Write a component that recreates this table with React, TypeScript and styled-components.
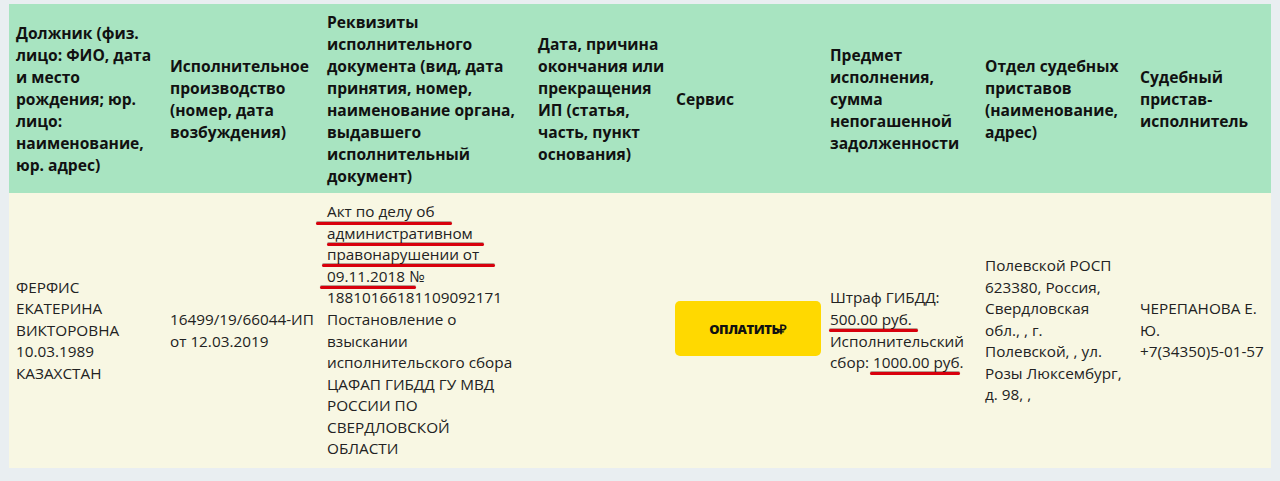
import React from "react";
import styled, { createGlobalStyle } from "styled-components";

const Global = createGlobalStyle`
  html, body { margin: 0; padding: 0; background: #e9eef1; }
  body { font-family: "Open Sans", "Noto Sans", sans-serif; color: #1d1d1d; }
`;

const Page = styled.div`
  padding: 4px 9px 13px 9px;
`;

const Table = styled.table`
  width: 1262px;
  table-layout: fixed;
  border-collapse: collapse;
  border-spacing: 0;
`;

const HeadRow = styled.tr`
  background: #a8e4c1;
  height: 189px;
`;

const BodyRow = styled.tr`
  background: #f8f7e3;
  height: 275px;
`;

const Th = styled.th`
  text-align: left;
  vertical-align: middle;
  font-weight: 700;
  font-size: 15.6px;
  line-height: 22px;
  color: #111;
  padding: 6px 3px 6px 7px;
`;

const Td = styled.td`
  vertical-align: middle;
  font-size: 15.3px;
  line-height: 21.6px;
  color: #222;
  padding: 6px 7px 6px 7px;
`;

const NoWrap = styled.span`
  white-space: nowrap;
`;

const Marked = styled.span<{ $l: number; $r: number; $y: number }>`
  position: relative;
  &::after {
    content: "";
    position: absolute;
    left: ${(p) => p.$l}px;
    right: ${(p) => p.$r}px;
    bottom: ${(p) => p.$y}px;
    height: 3px;
    border-radius: 2px;
    background: #d8000c;
    box-shadow: 0 -1px 0 rgba(60, 0, 0, 0.35);
  }
`;

const PayButton = styled.button`
  display: flex;
  align-items: center;
  justify-content: center;
  width: 146px;
  height: 55px;
  margin-left: -1px;
  margin-top: -4px;
  border: none;
  border-radius: 5px;
  background: #ffd900;
  font-family: "Open Sans", sans-serif;
  font-weight: 800;
  font-size: 13px;
  letter-spacing: -0.5px;
  color: #111;
  cursor: pointer;
`;

const widths = [154, 157, 211, 138, 154, 155, 155, 138];

export default function App() {
  return (
    <>
      <Global />
      <Page>
        <Table>
          <colgroup>
            {widths.map((w, i) => (
              <col key={i} style={{ width: w }} />
            ))}
          </colgroup>
          <thead>
            <HeadRow>
              <Th>Должник (физ. лицо: ФИО, дата и место рождения; юр. лицо: наименование, юр. адрес)</Th>
              <Th>Исполнительное производство (номер, дата возбуждения)</Th>
              <Th>Реквизиты исполнительного документа (вид, дата принятия, номер, наименование органа, выдавшего исполнительный документ)</Th>
              <Th>Дата, причина окончания или прекращения ИП (статья, часть, пункт основания)</Th>
              <Th>Сервис</Th>
              <Th>Предмет исполнения, сумма непогашенной задолженности</Th>
              <Th>Отдел судебных приставов (наименование, адрес)</Th>
              <Th>Судебный пристав-исполнитель</Th>
            </HeadRow>
          </thead>
          <tbody>
            <BodyRow>
              <Td>ФЕРФИС<br />ЕКАТЕРИНА<br />ВИКТОРОВНА<br />10.03.1989<br />КАЗАХСТАН</Td>
              <Td><NoWrap>16499/19/66044-ИП</NoWrap> от 12.03.2019</Td>
              <Td>
                <Marked $l={-11} $r={-18} $y={-4}>Акт по делу об</Marked>
                <br />
                <Marked $l={0} $r={-11} $y={-3}>административном</Marked>
                <br />
                <Marked $l={-5} $r={-16} $y={-3}>правонарушении от</Marked>
                <br />
                <Marked $l={-7} $r={-11} $y={-3}>09.11.2018</Marked> №<br />
                18810166181109092171 Постановление о взыскании исполнительского сбора ЦАФАП ГИБДД ГУ МВД РОССИИ ПО СВЕРДЛОВСКОЙ<br />ОБЛАСТИ
              </Td>
              <Td></Td>
              <Td>
                <PayButton>ОПЛАТИТЬ₽</PayButton>
              </Td>
              <Td>
                Штраф ГИБДД:<br />
                <Marked $l={-1} $r={-6} $y={-3}>500.00 руб.</Marked>
                <br />
                Исполнительский сбор: <Marked $l={-3} $r={4} $y={-3}>1000.00 руб.</Marked>
              </Td>
              <Td>Полевской РОСП 623380, Россия, Свердловская<br />обл., , г. Полевской, , ул. Розы Люксембург, д. 98, ,</Td>
              <Td>ЧЕРЕПАНОВА Е.<br />Ю.<br /><NoWrap>+7(34350)5-01-57</NoWrap></Td>
            </BodyRow>
          </tbody>
        </Table>
      </Page>
    </>
  );
}
